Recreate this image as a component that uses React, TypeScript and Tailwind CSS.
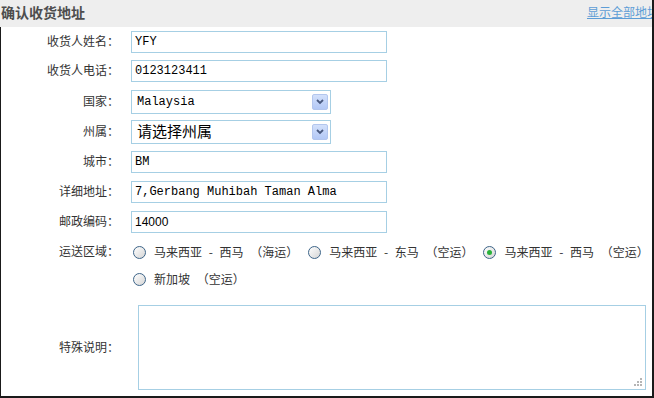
import React from 'react';

const cjk = '"Liberation Sans", "Noto Sans CJK SC", sans-serif';
const cjkFirst = '"Noto Sans CJK SC", "Liberation Sans", sans-serif';
const mono = '"Liberation Mono", "Noto Sans CJK SC", monospace';

const Label = ({ text, className = '' }: { text: string; className?: string }) => (
  <div className={`w-[118px] shrink-0 text-right text-[12px] text-[#333] ${className}`}>{text}</div>
);

const TextInput = ({ value, monoFont = true }: { value: string; monoFont?: boolean }) => (
  <input
    readOnly
    value={value}
    className="ml-[12px] h-[22px] w-[256px] border border-[#a6cfe4] bg-white px-[3px] text-[12px] text-black outline-none"
    style={{ fontFamily: monoFont ? mono : cjk }}
  />
);

const FakeSelect = ({ value, big = false }: { value: string; big?: boolean }) => (
  <div className="ml-[12px] flex h-[24px] w-[200px] items-center justify-between border border-[#a6cfe4] bg-white pl-[5px] pr-[2px]">
    <span
      className={big ? 'text-[15px] text-black' : 'text-[12px] text-black'}
      style={{ fontFamily: big ? cjk : mono }}
    >
      {value}
    </span>
    <span className="flex h-[16px] w-[16px] items-center justify-center rounded-[2px] border border-[#b3c6ee] bg-gradient-to-b from-[#d3e0fb] to-[#b3c8f6]">
      <svg width="8" height="6" viewBox="0 0 8 6">
        <path d="M1 1 L4 4 L7 1" stroke="#4a5a80" strokeWidth="1.8" fill="none" />
      </svg>
    </span>
  </div>
);

const Radio = ({ checked = false }: { checked?: boolean }) => (
  <span className="relative flex h-[13px] w-[13px] shrink-0 items-center justify-center rounded-full border border-[#3d6488] bg-gradient-to-br from-white to-[#d5d5d5]">
    {checked && <span className="h-[5px] w-[5px] rounded-full bg-[#29b23a]" />}
  </span>
);

const Option = ({ text, checked = false }: { text: string; checked?: boolean }) => (
  <div className="mr-[10px] flex h-[22px] items-center">
    <Radio checked={checked} />
    <span
      className="ml-[8px] whitespace-pre text-[12px] text-[#333] [word-spacing:4px]"
      style={{ fontFamily: cjkFirst }}
    >
      {text}
    </span>
  </div>
);

export default function App() {
  return (
    <div
      className="relative h-[398px] w-[654px] overflow-hidden border-b-2 border-r-2 border-[#1a1a1a] bg-white"
      style={{ fontFamily: cjk }}
    >
      <div className="flex h-[27px] items-center justify-between overflow-hidden bg-[#eeeeee]">
        <span className="pl-[1px] text-[14px] font-bold text-[#4d4d4d]">确认收货地址</span>
        <a className="-mr-[7px] -mt-[1px] text-[12px] text-[#5d9dd6] underline">显示全部地址</a>
      </div>

      <div className="flex h-[369px] flex-col overflow-hidden border-l border-[#1a1a1a] pt-[4px]">
        <div className="mb-[7px] flex items-center">
          <Label text="收货人姓名：" />
          <TextInput value="YFY" />
        </div>
        <div className="mb-[8px] flex items-center">
          <Label text="收货人电话：" />
          <TextInput value="0123123411" />
        </div>
        <div className="mb-[6px] flex items-center">
          <Label text="国家：" />
          <FakeSelect value="Malaysia" />
        </div>
        <div className="mb-[7px] flex items-center">
          <Label text="州属：" />
          <FakeSelect value="请选择州属" big />
        </div>
        <div className="mb-[8px] flex items-center">
          <Label text="城市：" />
          <TextInput value="BM" />
        </div>
        <div className="mb-[8px] flex items-center">
          <Label text="详细地址：" />
          <TextInput value="7,Gerbang Muhibah Taman Alma" />
        </div>
        <div className="mb-[8px] flex items-center">
          <Label text="邮政编码：" />
          <TextInput value="14000" monoFont={false} />
        </div>
        <div className="flex items-start">
          <Label text="运送区域：" className="leading-[22px]" />
          <div className="ml-[14px] flex w-[560px] shrink-0 flex-wrap gap-y-[5px]">
            <Option text="马来西亚 - 西马 （海运）" />
            <Option text="马来西亚 - 东马 （空运）" />
            <Option text="马来西亚 - 西马 （空运）" checked />
            <Option text="新加坡 （空运）" />
          </div>
        </div>
        <div className="mt-[15px] flex items-center">
          <Label text="特殊说明：" />
          <div className="relative ml-[19px]">
            <textarea
              readOnly
              className="block h-[85px] w-[508px] resize-none border border-[#a6cfe4] bg-white outline-none"
            />
            <svg className="absolute bottom-[3px] right-[3px]" width="9" height="9" viewBox="0 0 9 9">
              <rect x="6" y="0" width="2" height="2" fill="#b5b5b5" />
              <rect x="3" y="3" width="2" height="2" fill="#b5b5b5" />
              <rect x="6" y="3" width="2" height="2" fill="#b5b5b5" />
              <rect x="0" y="6" width="2" height="2" fill="#b5b5b5" />
              <rect x="3" y="6" width="2" height="2" fill="#b5b5b5" />
              <rect x="6" y="6" width="2" height="2" fill="#b5b5b5" />
            </svg>
          </div>
        </div>
      </div>
    </div>
  );
}
